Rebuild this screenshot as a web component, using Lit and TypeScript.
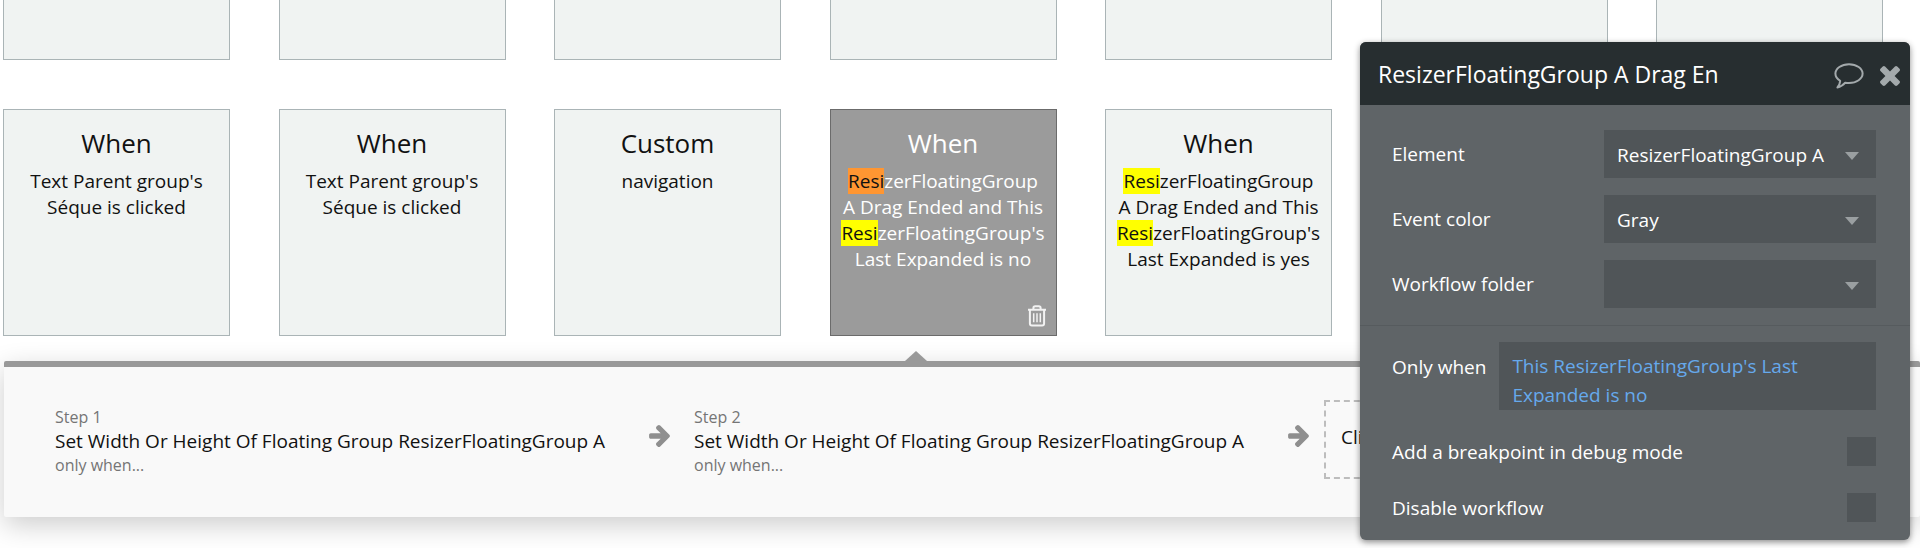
import { LitElement, html, css, svg } from "lit";
import { customElement, property } from "lit/decorators.js";

type Piece = string | { hit: string; current?: boolean };

interface WorkflowEvent {
  title: string;
  text: Piece[];
  selected?: boolean;
}

const FONT = css`"Open Sans", "Noto Sans", sans-serif`;

const EVENTS: WorkflowEvent[] = [
  { title: "When", text: ["Text Parent group's Séque is clicked"] },
  { title: "When", text: ["Text Parent group's Séque is clicked"] },
  { title: "Custom", text: ["navigation"] },
  {
    title: "When",
    selected: true,
    text: [
      { hit: "Resi", current: true },
      "zerFloatingGroup A\u00a0Drag Ended and This ",
      { hit: "Resi" },
      "zerFloatingGroup's Last Expanded is no",
    ],
  },
  {
    title: "When",
    text: [
      { hit: "Resi" },
      "zerFloatingGroup A\u00a0Drag Ended and This ",
      { hit: "Resi" },
      "zerFloatingGroup's Last Expanded is yes",
    ],
  },
];

const STEPS = [
  { name: "Step 1", action: "Set Width Or Height Of Floating Group ResizerFloatingGroup A", condition: "only when..." },
  { name: "Step 2", action: "Set Width Or Height Of Floating Group ResizerFloatingGroup A", condition: "only when..." },
];

const arrowIcon = html`<svg class="arrow" viewBox="0 0 1472 1558" aria-hidden="true">
  ${svg`<path fill="currentColor" transform="translate(0 -181)" d="M1472 960q0 54-37 91l-651 651q-39 37-91 37-51 0-90-37l-75-75q-38-38-38-91t38-91l293-293h-704q-52 0-84.5-37.5t-32.5-90.5v-128q0-53 32.5-90.5t84.5-37.5h704l-293-294q-38-36-38-90t38-90l75-75q38-38 90-38 53 0 91 38l651 651q37 35 37 90z"/>`}
</svg>`;

const trashIcon = html`<svg width="20" height="22" viewBox="0 0 20 22" fill="none" stroke="currentColor" stroke-width="2" aria-hidden="true">
  <path d="M1 4.8H19M6.4 4.6V3Q6.4 1.2 8.2 1.2H11.8Q13.6 1.2 13.6 3V4.6M2.9 5V18.6Q2.9 20.6 4.9 20.6H15.1Q17.1 20.6 17.1 18.6V5" />
  <path stroke-width="1.5" d="M6.7 8.2V17.2M10 8.2V17.2M13.3 8.2V17.2" />
</svg>`;

const bubbleIcon = html`<svg width="30" height="26" viewBox="0 0 30 26" fill="none" stroke="currentColor" stroke-width="2" stroke-linejoin="round" aria-hidden="true">
  <path d="M15 1.2C22.6 1.2 28.6 5.4 28.6 10.6S22.6 20 15 20Q13 20 11.2 19.7Q8 23.6 3.4 24.4Q6 21.6 6.2 17.9Q1.4 15.2 1.4 10.6C1.4 5.4 7.4 1.2 15 1.2Z" />
</svg>`;

const closeIcon = html`<svg width="20" height="20" viewBox="302 302 1188 1188" aria-hidden="true">
  <path fill="currentColor" d="M1490 1322q0 40-28 68l-136 136q-28 28-68 28t-68-28l-294-294-294 294q-28 28-68 28t-68-28l-136-136q-28-28-28-68t28-68l294-294-294-294q-28-28-28-68t28-68l136-136q28-28 68-28t68 28l294 294 294-294q28-28 68-28t68 28l136 136q28 28 28 68t-28 68l-294 294 294 294q28 28 28 68z" transform="translate(0 -64)" />
</svg>`;

@customElement("event-card")
export class EventCard extends LitElement {
  @property({ attribute: false }) event?: WorkflowEvent;

  static styles = css`
    :host {
      display: block;
    }
    .card {
      box-sizing: border-box;
      display: flex;
      flex-direction: column;
      height: 227px;
      padding: 15px 9px 8px;
      border: 1px solid #aab4b6;
      background: #f0f3f2;
      color: #111;
      font-family: ${FONT};
      text-align: center;
    }
    .selected {
      border-color: #6b6b6b;
      background: #9b9b9b;
      color: #fff;
    }
    .title {
      margin: 0;
      font-size: 26px;
      font-weight: 400;
      line-height: 36px;
    }
    .text {
      margin: 7px 0 0;
      font-size: 19px;
      line-height: 26px;
    }
    .hit {
      background: #ffff00;
      color: #111;
    }
    .current {
      background: #ff9632;
    }
    .delete {
      display: flex;
      align-self: flex-end;
      margin-top: auto;
      padding: 0;
      border: 0;
      background: none;
      color: #f2f2f2;
      cursor: pointer;
    }
  `;

  render() {
    const e = this.event;
    if (!e) return html``;
    return html`<article class="card ${e.selected ? "selected" : ""}">
      <h2 class="title">${e.title}</h2>
      <p class="text">${e.text.map((p) =>
        typeof p === "string" ? p : html`<mark class="hit ${p.current ? "current" : ""}">${p.hit}</mark>`
      )}</p>
      ${e.selected ? html`<button class="delete" type="button" aria-label="Delete event">${trashIcon}</button>` : ""}
    </article>`;
  }
}

@customElement("action-strip")
export class ActionStrip extends LitElement {
  static styles = css`
    :host {
      display: block;
      font-family: ${FONT};
    }
    .strip {
      position: relative;
      box-sizing: border-box;
      display: flex;
      align-items: center;
      height: 156px;
      padding: 0 0 6px 51px;
      border-top: 6px solid #999;
      border-radius: 2px;
      background: #f9f9f9;
      box-shadow: 0 8px 28px rgba(0, 0, 0, 0.2);
    }
    .pointer {
      position: absolute;
      bottom: 100%;
      left: 901px;
      margin-bottom: 6px;
      border: 11px solid transparent;
      border-top: 0;
      border-bottom: 10px solid #999;
    }
    .step {
      flex: none;
      min-width: 564px;
      padding-top: 4px;
      color: #757575;
      font-size: 16px;
      line-height: 22px;
    }
    .step p {
      margin: 0;
    }
    .step .action {
      color: #111;
      font-size: 19px;
      line-height: 26px;
    }
    .arrow {
      flex: none;
      width: 21px;
      height: 22px;
      margin: 0 24px 7px 30px;
      color: #8f8f8f;
    }
    .add {
      flex: none;
      height: 79px;
      margin-left: -9px;
      padding: 0 15px 4px;
      border: 2px dashed #bdbdbd;
      background: none;
      color: #111;
      font-family: inherit;
      font-size: 19px;
      cursor: pointer;
    }
  `;

  render() {
    return html`<section class="strip" aria-label="Actions">
      <span class="pointer"></span>
      ${STEPS.map((s) => html`<div class="step">
          <p>${s.name}</p>
          <p class="action">${s.action}</p>
          <p>${s.condition}</p>
        </div>
        ${arrowIcon}`)}
      <button class="add" type="button">Click here to add an action...</button>
    </section>`;
  }
}

@customElement("property-panel")
export class PropertyPanel extends LitElement {
  static styles = css`
    :host {
      display: block;
      overflow: hidden;
      border-radius: 6px;
      background: #5f6467;
      color: #fff;
      font-family: ${FONT};
      font-size: 19px;
      line-height: 26px;
      box-shadow: 0 2px 6px rgba(0, 0, 0, 0.45);
    }
    .head {
      display: flex;
      align-items: center;
      height: 63px;
      padding: 0 10px 0 18px;
      background: #272e30;
    }
    .name {
      flex: 1;
      min-width: 0;
      margin-right: 16px;
      padding: 0;
      border: 0;
      background: none;
      color: inherit;
      font-family: inherit;
      font-size: 23px;
    }
    .icon {
      display: flex;
      margin-left: 16px;
      padding: 4px 0 0;
      border: 0;
      background: none;
      color: #a3a9ab;
      cursor: pointer;
    }
    .fields {
      display: grid;
      gap: 17px;
      padding: 25px 34px 17px 32px;
      border-bottom: 1px solid #565b5e;
    }
    .field {
      display: grid;
      grid-template-columns: 1fr 272px;
      align-items: center;
    }
    .pick {
      position: relative;
    }
    .select {
      box-sizing: border-box;
      display: block;
      width: 100%;
      height: 48px;
      padding: 2px 40px 0 13px;
      border: 0;
      border-radius: 0;
      appearance: none;
      background: #505558;
      color: #fff;
      font-family: inherit;
      font-size: 19px;
    }
    .caret {
      position: absolute;
      top: 22px;
      right: 17px;
      pointer-events: none;
    }
    .rest {
      display: grid;
      gap: 27px;
      padding: 16px 34px 18px 32px;
    }
    .condition {
      display: flex;
      align-items: flex-start;
      gap: 13px;
    }
    .condition label {
      padding-top: 12px;
    }
    .expression {
      box-sizing: border-box;
      flex: 1;
      height: 68px;
      padding: 10px 13px 0;
      border: 0;
      overflow: hidden;
      resize: none;
      background: #505558;
      color: #66a9ec;
      font-family: inherit;
      font-size: 19px;
      line-height: 29px;
    }
    .toggle {
      display: flex;
      align-items: center;
      justify-content: space-between;
    }
    .box {
      width: 29px;
      height: 29px;
      margin: 0;
      appearance: none;
      background: #505558;
    }
  `;

  private select(id: string, label: string, value: string) {
    return html`<div class="field">
      <label for=${id}>${label}</label>
      <div class="pick">
        <select class="select" id=${id}><option>${value}</option></select>
        <svg class="caret" width="14" height="8" viewBox="0 0 14 8" aria-hidden="true"><path fill="#9a9fa1" d="M0 0H14L7 8Z" /></svg>
      </div>
    </div>`;
  }

  private toggle(id: string, label: string) {
    return html`<div class="toggle">
      <label for=${id}>${label}</label>
      <input class="box" id=${id} type="checkbox" />
    </div>`;
  }

  render() {
    return html`
      <header class="head">
        <input class="name" aria-label="Event name" value="ResizerFloatingGroup A Drag En" />
        <button class="icon" type="button" aria-label="Comment">${bubbleIcon}</button>
        <button class="icon" type="button" aria-label="Close">${closeIcon}</button>
      </header>
      <div class="fields">
        ${this.select("element", "Element", "ResizerFloatingGroup A")}
        ${this.select("color", "Event color", "Gray")}
        ${this.select("folder", "Workflow folder", "")}
      </div>
      <div class="rest">
        <div class="condition">
          <label for="only">Only when</label>
          <textarea class="expression" id="only" .value=${"This ResizerFloatingGroup's Last Expanded is no"}></textarea>
        </div>
        ${this.toggle("breakpoint", "Add a breakpoint in debug mode")}
        ${this.toggle("disable", "Disable workflow")}
      </div>
    `;
  }
}

@customElement("app-root")
export class AppRoot extends LitElement {
  static styles = css`
    :host {
      position: relative;
      display: block;
      min-height: 100vh;
      overflow: hidden;
      background: #fff;
    }
    .row {
      display: grid;
      grid-template-columns: repeat(7, 227px);
      justify-content: space-between;
      padding: 0 37px 0 3px;
    }
    .events {
      padding-top: 49px;
      padding-bottom: 25px;
    }
    .tail {
      height: 59px;
      border: 1px solid #aab4b6;
      border-top: 0;
      background: #f0f3f2;
    }
    .actions {
      display: block;
      margin-left: 4px;
    }
    .panel {
      position: absolute;
      top: 42px;
      right: 10px;
      width: 550px;
    }
  `;

  render() {
    return html`
      <div class="row">${Array.from({ length: 7 }, () => html`<div class="tail"></div>`)}</div>
      <main class="row events">${EVENTS.map((e) => html`<event-card .event=${e}></event-card>`)}</main>
      <action-strip class="actions"></action-strip>
      <property-panel class="panel"></property-panel>
    `;
  }
}
